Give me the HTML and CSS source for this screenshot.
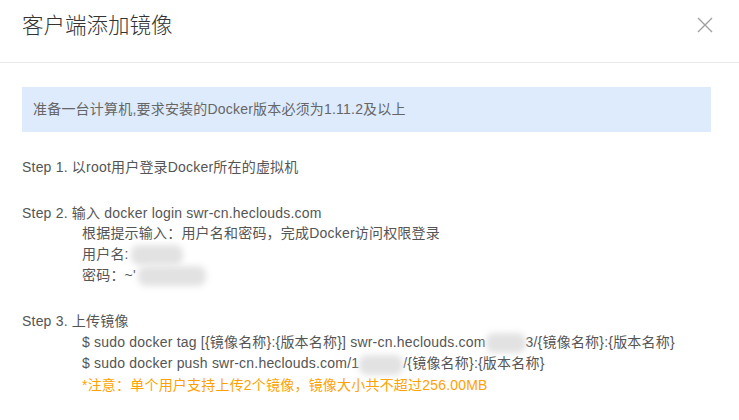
FILE: index.html
```html
<!DOCTYPE html>
<html lang="zh">
<head>
<meta charset="utf-8">
<link rel="stylesheet" href="styles.css">
</head>
<body>
<div class="dialog">
  <div class="header">
    <div class="title">客户端添加镜像</div>
    <svg class="close" width="16" height="16" viewBox="0 0 16 16"><path d="M1 1 L15 15 M15 1 L1 15" stroke="#a0a0a0" stroke-width="1.4" fill="none"/></svg>
  </div>
  <div class="content">
    <div class="notice">准备一台计算机,要求安装的Docker版本必须为1.11.2及以上</div>
    <div class="step">
      <div class="line">Step 1. 以root用户登录Docker所在的虚拟机</div>
    </div>
    <div class="step">
      <div class="line">Step 2. 输入 docker login swr-cn.heclouds.com</div>
      <div class="line sub">根据提示输入：用户名和密码，完成Docker访问权限登录</div>
      <div class="line sub">用户名:<span class="blur b-user"></span></div>
      <div class="line sub">密码：~'<span class="blur b-pass"></span></div>
    </div>
    <div class="step">
      <div class="line">Step 3. 上传镜像</div>
      <div class="line sub">$ sudo docker tag [{镜像名称}:{版本名称}] swr-cn.heclouds.com<span class="blur b-ns1"></span>3/{镜像名称}:{版本名称}</div>
      <div class="line sub">$ sudo docker push swr-cn.heclouds.com/1<span class="blur b-ns2"></span>/{镜像名称}:{版本名称}</div>
      <div class="line sub warn">*注意：单个用户支持上传2个镜像，镜像大小共不超过256.00MB</div>
    </div>
  </div>
</div>
</body>
</html>
```
FILE: styles.css
```css
html, body {
  margin: 0;
  padding: 0;
  background: #fff;
}
body {
  font-family: "Liberation Sans", Arial, "Noto Sans CJK SC", sans-serif;
  color: #555;
  width: 739px;
  height: 420px;
  overflow: hidden;
}
.header {
  height: 52px;
  padding: 10px 26px 0 22px;
  border-bottom: 1px solid #e8e8e8;
  display: flex;
  justify-content: space-between;
  align-items: flex-start;
}
.title {
  font-size: 21.5px;
  line-height: 28px;
  color: #333;
  font-family: "Noto Sans CJK SC", sans-serif;
  font-weight: 300;
}
.close {
  margin-top: 7px;
}
.content {
  padding: 24px 28px 0 22px;
}
.notice {
  background: #ddebfd;
  height: 45px;
  line-height: 45px;
  padding: 0 11px;
  font-size: 14px;
  letter-spacing: 0.2px;
  color: #666;
}
.step {
  margin-top: 25px;
}
.step:first-of-type {
  margin-top: 22px;
}
.line {
  font-size: 14px;
  line-height: 20.6px;
  letter-spacing: 0.2px;
  color: #555;
  white-space: nowrap;
}
.sub {
  padding-left: 60px;
}
.warn {
  color: #ffa200;
}
.blur {
  display: inline-block;
  vertical-align: middle;
  height: 20px;
  background: #e2e2e2;
  filter: blur(3px);
  border-radius: 8px;
}
.b-user { width: 52px; margin-left: 2px; }
.b-pass { width: 68px; margin-left: 2px; }
.b-ns1 { width: 40px; }
.b-ns2 { width: 44px; }
```
